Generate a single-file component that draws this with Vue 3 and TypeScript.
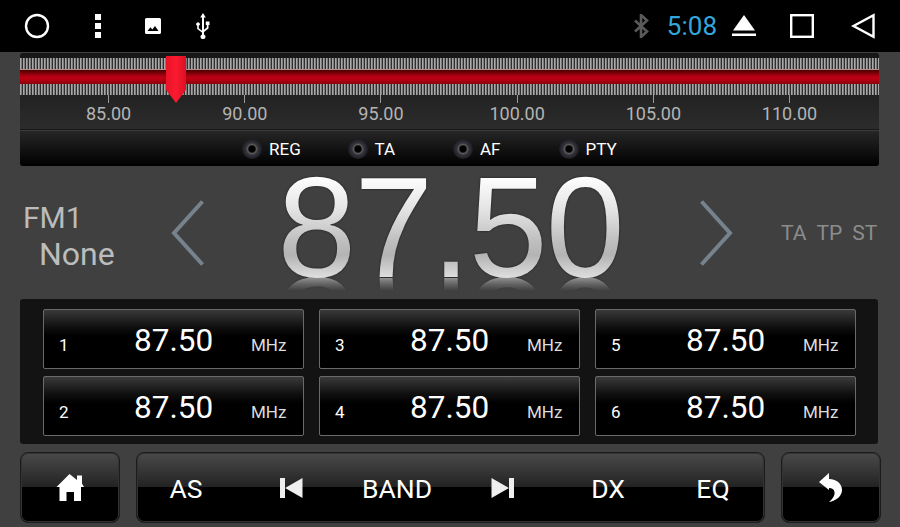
<template>
  <div class="radio">
    <header class="status-bar">
      <div class="status-left">
        <svg class="ic-circle" width="26" height="26" viewBox="0 0 26 26"><circle cx="13" cy="13" r="11" fill="none" stroke="#fff" stroke-width="2.4" /></svg>
        <svg class="ic-menu" width="8" height="26" viewBox="0 0 8 26"><rect x="1" y="1" width="6" height="6" fill="#fff" /><rect x="1" y="10" width="6" height="6" fill="#fff" /><rect x="1" y="19" width="6" height="6" fill="#fff" /></svg>
        <svg class="ic-image" width="16" height="16" viewBox="0 0 16 16"><path fill="#fff" d="M1.500 0h13A1.500 1.500 0 0 1 16 1.500v13a1.500 1.500 0 0 1-1.500 1.500h-13A1.500 1.500 0 0 1 0 14.500v-13A1.500 1.500 0 0 1 1.500 0zM2.500 13h11l-3.500-5-2.700 3.400-1.900-2.100z" fill-rule="evenodd" /></svg>
        <svg class="ic-usb" width="14" height="26" viewBox="0 0 14 26"><path fill="#fff" d="M7 0l2.800 4.500H8v12.300l2.800-2.200V12H9.800V8.500h3.700V12h-1v3.500l-4.500 3.600v2.300a2.500 2.500 0 1 1-2 0v-1.800L1.200 16v-3.200a1.800 1.800 0 1 1 1.600 0v2.400L6 17.800V4.500H4.200z" /></svg>
      </div>
      <div class="status-right">
        <svg class="ic-bt" width="16" height="24" viewBox="0 0 16 24"><path fill="none" stroke="#5a5a5a" stroke-width="2.600" d="M2 6.500l12 11-6 5.500V1l6 5.500-12 11" /></svg>
        <span class="clock">5:08</span>
        <svg class="ic-eject" width="24" height="22" viewBox="0 0 24 22"><path fill="#fff" d="M12 0l11 15.500H1zM0 18.500h24V21H0z" /></svg>
        <svg class="ic-square" width="24" height="24" viewBox="0 0 24 24"><rect x="1.200" y="1.200" width="21.600" height="21.600" fill="none" stroke="#fff" stroke-width="2.400" /></svg>
        <svg class="ic-back" width="24" height="26" viewBox="0 0 24 26"><path fill="none" stroke="#fff" stroke-width="2.400" d="M22.500 2.200v21.600L2.500 13z" /></svg>
      </div>
    </header>

    <section class="dial">
      <div class="scale">
        <div class="ticks"></div>
        <div class="red-line"></div>
        <div class="ticks"></div>
        <div class="marks">
          <div v-for="m in marks" :key="m" class="mark">
            <i></i>
            <span>{{ m }}</span>
          </div>
        </div>
        <div class="needle"></div>
      </div>
      <div class="options">
        <span v-for="o in options" :key="o" class="option">
          <i class="led"></i>{{ o }}
        </span>
      </div>
    </section>

    <section class="tuner">
      <div class="band">
        <div class="fm">FM1</div>
        <div class="ps">None</div>
      </div>
      <svg class="chevron" width="34" height="66" viewBox="0 0 34 66"><path fill="none" stroke="#76828c" stroke-width="4" d="M31.500 1.500L3 33l28.500 31.500" /></svg>
      <div class="freq">
        <span class="freq-main">87.50</span>
      </div>
      <svg class="chevron" width="34" height="66" viewBox="0 0 34 66"><path fill="none" stroke="#76828c" stroke-width="4" d="M2.500 1.500L31 33 2.500 64.500" /></svg>
      <div class="flags">
        <span>TA</span><span>TP</span><span>ST</span>
      </div>
    </section>

    <section class="presets">
      <div v-for="p in presets" :key="p" class="preset">
        <span class="num">{{ p }}</span>
        <span class="val">87.50</span>
        <span class="unit">MHz</span>
      </div>
    </section>

    <footer class="toolbar">
      <button class="btn side">
        <svg width="28" height="28" viewBox="0 0 28 28"><path fill="#fff" d="M13.500 0L21 6V1.500h5v8l2 3.500h-3v14h-7v-9h-7.500v9H3.500V13H.5z" /></svg>
      </button>
      <div class="btn middle">
        <span class="cell as">AS</span>
        <span class="cell">
          <svg width="24" height="22" viewBox="0 0 24 22"><path fill="#eee" d="M1 1h5v20H1zM23.500 1v20L6 11z" /></svg>
        </span>
        <span class="cell band-btn">BAND</span>
        <span class="cell">
          <svg width="24" height="22" viewBox="0 0 24 22"><path fill="#eee" d="M23 1h-5v20h5zM0.500 1v20L18 11z" /></svg>
        </span>
        <span class="cell">DX</span>
        <span class="cell">EQ</span>
      </div>
      <button class="btn side">
        <svg width="24" height="30" viewBox="0 0 24 30"><path fill="#fff" d="M0 9L10 0v6c8 0 13 5 13 11 0 6-6 11-13 12 4-3 6-7 5.500-10-.5-3-2.500-4-5.500-4v2z" /></svg>
      </button>
    </footer>
  </div>
</template>

<script setup lang="ts">
const marks = ['85.00', '90.00', '95.00', '100.00', '105.00', '110.00']
const options = ['REG', 'TA', 'AF', 'PTY']
const presets = [1, 2, 3, 4, 5, 6]
</script>

<style scoped>
.radio {
  width: 900px;
  height: 527px;
  overflow: hidden;
  display: flex;
  flex-direction: column;
  background: #404040;
  color: #fff;
  font-family: Roboto, "Liberation Sans", sans-serif;
}

.status-bar {
  height: 52px;
  flex: none;
  background: #000;
  display: flex;
  justify-content: space-between;
  align-items: center;
}

.status-left,
.status-right {
  display: flex;
  align-items: center;
}

.ic-circle { margin-left: 24px; }
.ic-menu { margin-left: 44px; }
.ic-image { margin-left: 43px; }
.ic-usb { margin-left: 35px; }

.status-right { margin-right: 25px; }
.ic-bt { margin-right: 18px; }
.clock {
  font-size: 26px;
  color: #35a6dc;
  margin-right: 15px;
}
.ic-square { margin-left: 34px; }
.ic-back { margin-left: 37px; }

.dial {
  width: 859px;
  height: 113px;
  margin: 1px 0 0 20px;
  flex: none;
  display: flex;
  flex-direction: column;
  border-radius: 3px;
  overflow: hidden;
  background: #2a2a2a;
}

.scale {
  box-sizing: border-box;
  height: 77px;
  padding-top: 5px;
  flex: none;
  position: relative;
  background: linear-gradient(#161616, #2c2c2c);
  border-bottom: 1px solid #161616;
}

.ticks {
  height: 11px;
  background: repeating-linear-gradient(90deg, #a8a8a8 0 1px, #7c7c7c 1px 2px, #2e2e2e 2px 3px);
}

.red-line {
  height: 15px;
  background: linear-gradient(#b89090 0 1px, #500 1px 2px, #a00010 6px, #c00014 9px, #8e000c 100%);
}

.marks {
  display: flex;
  margin-left: 20.500px;
}

.mark {
  width: 136.200px;
  flex: none;
  display: flex;
  flex-direction: column;
  align-items: center;
  color: #b4b4b4;
  font-size: 18px;
  line-height: 21px;
}

.mark i {
  width: 1px;
  height: 8px;
  background: #999;
}

.needle {
  position: absolute;
  left: 146px;
  top: 3px;
  width: 20px;
  height: 47px;
  background: linear-gradient(90deg, #e81328, #fb1a30 50%, #d91024);
  clip-path: polygon(0 0, 100% 0, 100% 72%, 50% 100%, 0 72%);
}

.options {
  flex: 1;
  border-top: 1px solid #3c3c3c;
  background: linear-gradient(#262626, #000);
  display: flex;
  align-items: center;
  font-size: 17px;
  padding-left: 222px;
}

.option {
  display: flex;
  align-items: center;
  width: 105.500px;
  flex: none;
}

.led {
  width: 20px;
  height: 20px;
  border-radius: 50%;
  margin-right: 7px;
  background: radial-gradient(circle, #000 0 3px, #5c5c5c 4.500px, #34343c 6px, #1c1c22 10px);
}

.tuner {
  height: 133px;
  flex: none;
  display: flex;
  align-items: center;
}

.band {
  width: 148px;
  margin: 6px 0 0 23px;
  flex: none;
  color: #bcbcbc;
  line-height: 36px;
}

.fm { font-size: 30px; }

.ps {
  margin-left: 16px;
  font-size: 32px;
}

.chevron { flex: none; }

.freq {
  width: 490px;
  height: 133px;
  margin-right: 4px;
  flex: none;
  text-align: center;
  filter: drop-shadow(0 0 1px #1c1c1c);
}

.freq-main {
  display: block;
  font-family: "Liberation Sans", Arial, sans-serif;
  font-size: 142px;
  letter-spacing: -2px;
  line-height: 124px;
  color: transparent;
  background-image: linear-gradient(#fff 8%, #e4e4e4 35%, #bdbdbd 62%, #b4b4b4 72%, #dedede 90%);
  -webkit-background-clip: text;
  background-clip: text;
  -webkit-box-reflect: below -25px linear-gradient(transparent 79%, rgba(0, 0, 0, 0.6) 90%, transparent 91%);
}

.flags {
  margin-left: 48px;
  display: flex;
  gap: 10px;
  color: #8c8c8c;
  font-size: 21px;
}

.presets {
  width: 858px;
  height: 145px;
  margin-left: 20px;
  flex: none;
  box-sizing: border-box;
  padding: 10px 23px 8px;
  display: grid;
  grid-template-columns: repeat(3, 261px);
  grid-template-rows: 60px 60px;
  grid-auto-flow: column;
  column-gap: 15px;
  row-gap: 7px;
  background: #131313;
  border-radius: 3px;
}

.preset {
  display: flex;
  align-items: center;
  box-sizing: border-box;
  border: 1px solid #6a6a6a;
  border-radius: 2px;
  background: linear-gradient(#3a3a3a, #111 28%, #000 45%);
  padding: 0 16px 0 15px;
}

.num {
  font-size: 17px;
  width: 75px;
  margin-top: 12px;
}

.val {
  font-size: 31.500px;
  width: 117px;
  margin-top: 2px;
}

.unit {
  font-size: 17px;
  color: #ddd;
  margin-top: 12px;
}

.toolbar {
  margin: 8px 19px 0 20px;
  height: 71px;
  flex: none;
  display: flex;
  gap: 16px;
}

.btn {
  box-sizing: border-box;
  border: 1px solid #1c1c1c;
  border-radius: 8px;
  padding: 0;
  color: #fff;
  background: linear-gradient(#4a4a4a, #222 50%, #000 50%);
  box-shadow: inset 0 0 0 1px #333;
  display: flex;
  align-items: center;
  justify-content: center;
}

.side {
  width: 100px;
  flex: none;
}

.middle {
  flex: 1;
  justify-content: flex-start;
  gap: 5px;
  font-size: 26.500px;
}

.cell {
  width: 100px;
  flex: none;
  display: flex;
  justify-content: center;
  margin-top: 1px;
}

.as { margin-left: -1px; }
.band-btn { width: 102px; }
</style>
